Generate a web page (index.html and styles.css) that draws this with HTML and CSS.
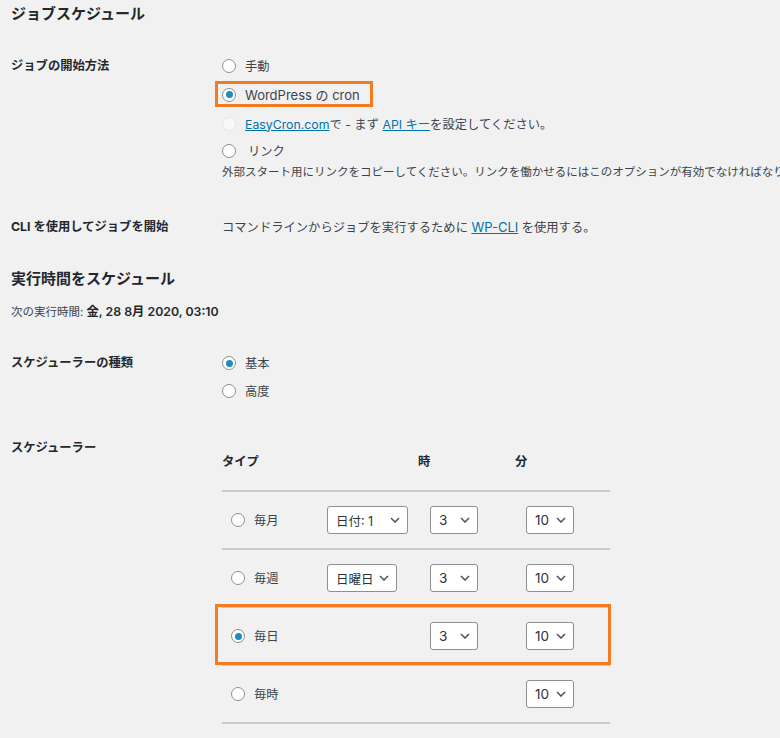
FILE: index.html
```html
<!DOCTYPE html>
<html lang="ja">
<head>
    <meta charset="UTF-8">
    <meta name="viewport" content="width=device-width, initial-scale=1.0">
    <title>ジョブスケジュール</title>
    <link rel="stylesheet" href="styles.css">
</head>
<body>

<div class="wrap">
    <h2 class="title">ジョブスケジュール</h2>

    <div class="form-row row-start">
        <div class="th">ジョブの開始方法</div>
        <div class="td">
            <label class="opt"><span class="radio"></span>手動</label>
            <label class="opt opt-marked"><span class="radio checked"></span><span class="latin">WordPress の cron</span></label>
            <div class="opt"><span class="radio disabled"></span><span><a href="#">EasyCron.com</a>で - まず <a href="#">API キー</a>を設定してください。</span></div>
            <label class="opt opt-link"><span class="radio"></span><span class="pad">リンク</span></label>
            <p class="description">外部スタート用にリンクをコピーしてください。リンクを働かせるにはこのオプションが有効でなければなりません。</p>
        </div>
    </div>

    <div class="form-row row-cli">
        <div class="th">CLI を使用してジョブを開始</div>
        <div class="td">コマンドラインからジョブを実行するために <a href="#" class="latin">WP-CLI</a> を使用する。</div>
    </div>

    <h2 class="title title-next">実行時間をスケジュール</h2>
    <p class="next-run">次の実行時間: <b>金, 28 8月 2020, 03:10</b></p>

    <div class="form-row row-type">
        <div class="th">スケジューラーの種類</div>
        <div class="td">
            <label class="opt opt-short"><span class="radio checked"></span>基本</label>
            <label class="opt opt-short"><span class="radio"></span>高度</label>
        </div>
    </div>

    <div class="form-row row-sched">
        <div class="th">スケジューラー</div>
        <div class="td">
            <div class="sched">
                <div class="sched-head">
                    <span>タイプ</span>
                    <span>時</span>
                    <span>分</span>
                </div>

                <div class="sched-row">
                    <label class="opt"><span class="radio"></span>毎月</label>
                    <span class="select w-day">日付: 1 <svg width="10" height="6" viewBox="0 0 10 6"><path d="M1 1l4 4 4-4" /></svg></span>
                    <span class="select w-num">3 <svg width="10" height="6" viewBox="0 0 10 6"><path d="M1 1l4 4 4-4" /></svg></span>
                    <span class="select w-num">10 <svg width="10" height="6" viewBox="0 0 10 6"><path d="M1 1l4 4 4-4" /></svg></span>
                </div>

                <div class="sched-row">
                    <label class="opt"><span class="radio"></span>毎週</label>
                    <span class="select w-week">日曜日 <svg width="10" height="6" viewBox="0 0 10 6"><path d="M1 1l4 4 4-4" /></svg></span>
                    <span class="select w-num">3 <svg width="10" height="6" viewBox="0 0 10 6"><path d="M1 1l4 4 4-4" /></svg></span>
                    <span class="select w-num">10 <svg width="10" height="6" viewBox="0 0 10 6"><path d="M1 1l4 4 4-4" /></svg></span>
                </div>

                <div class="sched-row marked">
                    <label class="opt"><span class="radio checked"></span>毎日</label>
                    <span></span>
                    <span class="select w-num">3 <svg width="10" height="6" viewBox="0 0 10 6"><path d="M1 1l4 4 4-4" /></svg></span>
                    <span class="select w-num">10 <svg width="10" height="6" viewBox="0 0 10 6"><path d="M1 1l4 4 4-4" /></svg></span>
                </div>

                <div class="sched-row">
                    <label class="opt"><span class="radio"></span>毎時</label>
                    <span></span>
                    <span></span>
                    <span class="select w-num">10 <svg width="10" height="6" viewBox="0 0 10 6"><path d="M1 1l4 4 4-4" /></svg></span>
                </div>
            </div>
        </div>
    </div>
</div>

</body>
</html>
```

FILE: styles.css
```css
body {
    margin: 0;
    background-color: #f1f1f1;
    font-family: Inter, "Noto Sans CJK JP", sans-serif;
    font-size: 12.3px;
    color: #3c434a;
}

.wrap {
    padding-left: 11px;
    height: 738px;
    overflow: hidden;
}

a {
    color: #0073aa;
    text-decoration: underline;
}

.latin {
    font-size: 13px;
}

.title {
    margin: 4px 0 0;
    font-size: 15px;
    line-height: 20px;
    font-weight: 700;
    color: #23282d;
}

.title-next {
    margin-top: 32px;
}

.next-run {
    margin: 15px 0 0;
    height: 16px;
    font-size: 11.5px;
    line-height: 16px;
}

.next-run b {
    color: #23282d;
    font-size: 12.3px;
    font-weight: 600;
}

/* filas del formulario */
.form-row {
    display: grid;
    grid-template-columns: 211px 1fr;
}

.th {
    font-weight: 700;
    color: #23282d;
}

.row-start {
    padding-top: 27px;
}

.row-start .th {
    line-height: 29px;
}

.row-cli {
    padding-top: 37px;
    line-height: 20px;
}

.row-cli .td {
    height: 20px;
}

.row-type {
    padding-top: 29px;
}

.row-type .th {
    line-height: 28px;
}

.row-sched {
    padding-top: 33px;
}

.row-sched .th {
    line-height: 20px;
}

/* opciones con radio */
.opt {
    display: flex;
    align-items: center;
    gap: 9px;
    height: 29px;
    white-space: nowrap;
}

.opt-short {
    height: 28px;
}

.opt-link {
    height: 26px;
}

.opt .pad {
    padding-left: 3px;
}

.opt-marked {
    position: relative;
    width: fit-content;
}

.opt-marked::after {
    content: '';
    position: absolute;
    left: -7px;
    right: -13px;
    top: 1px;
    bottom: 2px;
    border: 3px solid #f47b20;
}

.radio {
    flex: none;
    display: grid;
    place-items: center;
    box-sizing: border-box;
    width: 14px;
    height: 14px;
    border: 1px solid #8c8f94;
    border-radius: 50%;
    background-color: #fff;
}

.radio.checked::before {
    content: '';
    width: 7px;
    height: 7px;
    border-radius: 50%;
    background-color: #1e8cbe;
}

.radio.disabled {
    border-color: rgba(220, 220, 222, 0.6);
    background-color: rgba(255, 255, 255, 0.5);
}

.description {
    margin: 0;
    font-size: 11.5px;
    line-height: 16px;
    white-space: nowrap;
}

/* tabla del programador */
.sched {
    width: 388px;
    margin-top: 14px;
}

.sched-head {
    display: grid;
    grid-template-columns: 196px 97px auto;
    height: 38px;
    line-height: 20px;
    font-weight: 700;
    color: #23282d;
    border-bottom: 2px solid #cbcbcb;
}

.sched-row {
    display: grid;
    grid-template-columns: 96px 103px 96px auto;
    align-items: center;
    height: 56px;
    padding-left: 9px;
    border-bottom: 2px solid #cbcbcb;
}

.sched-row.marked {
    position: relative;
}

.sched-row.marked::after {
    content: '';
    position: absolute;
    left: -7px;
    right: -1px;
    top: -4px;
    bottom: -1px;
    border: 3px solid #f47b20;
}

.select {
    display: inline-flex;
    align-items: center;
    justify-content: space-between;
    box-sizing: border-box;
    height: 28px;
    padding: 0 7px 0 8px;
    border: 1px solid #8c8f94;
    border-radius: 3px;
    background-color: #fff;
    color: #2c3338;
    font-size: 13.5px;
    white-space: nowrap;
}

.select path {
    fill: none;
    stroke: #50575e;
    stroke-width: 1.6;
}

.w-day {
    width: 81px;
    font-size: 12.5px;
}

.w-week {
    width: 70px;
    font-size: 12.5px;
}

.w-num {
    width: 48px;
}
```
